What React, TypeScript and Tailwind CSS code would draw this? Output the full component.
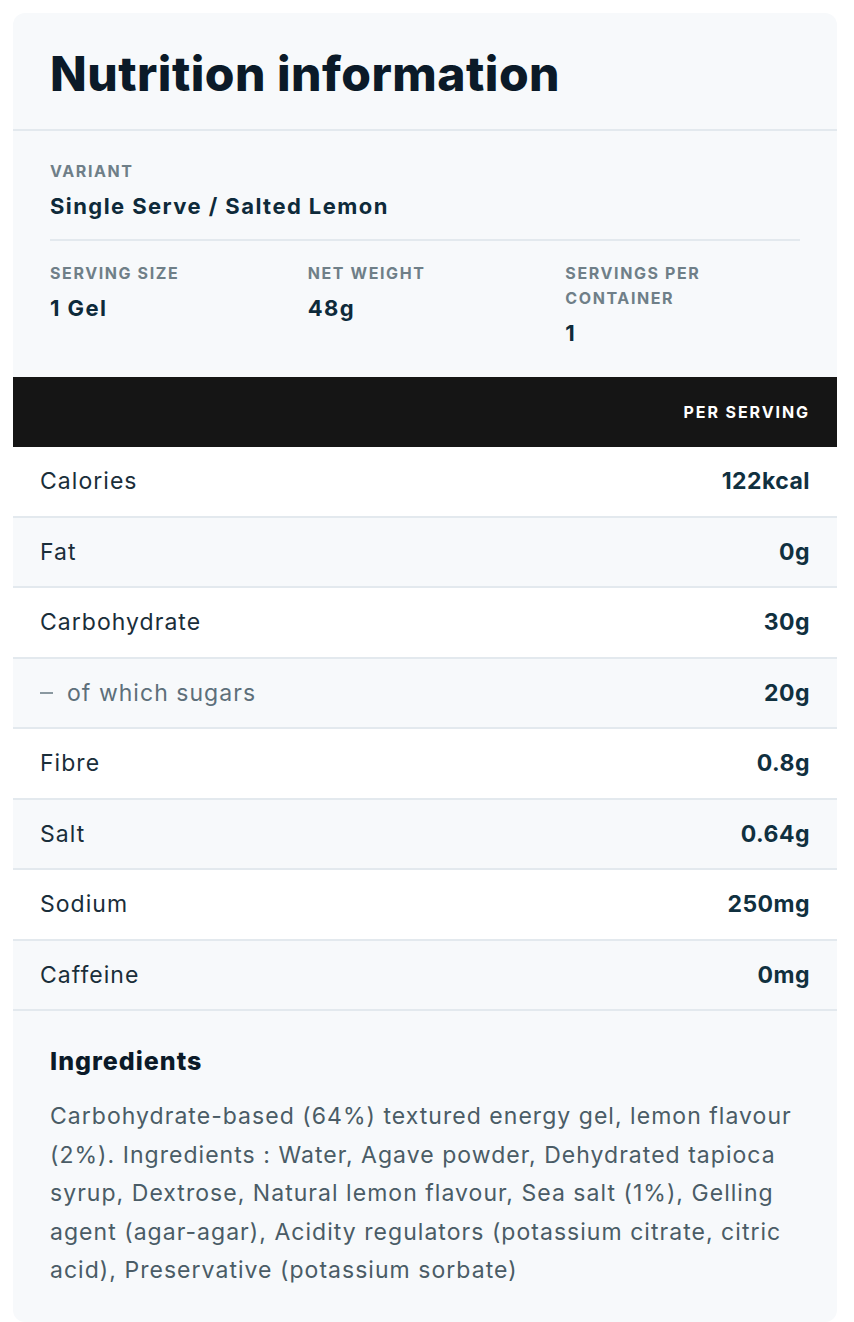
const rows = [
  { label: "Calories", value: "122kcal" },
  { label: "Fat", value: "0g" },
  { label: "Carbohydrate", value: "30g" },
  { label: "of which sugars", value: "20g", sub: true },
  { label: "Fibre", value: "0.8g" },
  { label: "Salt", value: "0.64g" },
  { label: "Sodium", value: "250mg" },
  { label: "Caffeine", value: "0mg" },
]

const font = "font-['Inter','Noto_Sans',sans-serif]"

function Info({ label, value }: { label: string; value: string }) {
  return (
    <div>
      <div className="text-[16px] font-bold uppercase leading-[25px] tracking-[0.1em] text-[#6f7f88]">{label}</div>
      <div className="mt-[7px] text-[22px] font-bold leading-[30px] tracking-[0.065em] text-[#0e2a3a]">{value}</div>
    </div>
  )
}

export default function App() {
  return (
    <div className={`min-h-screen bg-white pt-[13px] pl-[13px] pr-[17px] ${font}`}>
      <div className="overflow-hidden rounded-xl bg-[#f7f9fb]">
        {/* Title */}
        <div className="flex h-[118px] items-center border-b-2 border-[#e3e9ee] px-[37px] pt-[5px]">
          <h1 className="text-[48px] font-extrabold tracking-[0.01em] text-[#0b1a28]">Nutrition information</h1>
        </div>

        {/* Variant + serving info */}
        <div className="px-[37px] pt-[28px] pb-[29px]">
          <Info label="Variant" value="Single Serve / Salted Lemon" />
          <div className="mt-[18px] mb-[20px] h-[2px] bg-[#e3e9ee]" />
          <div className="grid grid-cols-3 gap-x-[23px]">
            <Info label="Serving size" value="1 Gel" />
            <Info label="Net weight" value="48g" />
            <Info label="Servings per container" value="1" />
          </div>
        </div>

        {/* Table header */}
        <div className="flex h-[70px] items-center justify-end bg-[#151515] px-[27px]">
          <span className="text-[16px] font-bold uppercase tracking-[0.12em] text-white">Per serving</span>
        </div>

        {/* Rows */}
        {rows.map((r, i) => (
          <div
            key={r.label}
            className={`flex h-[70.5px] items-center justify-between border-b-2 border-[#e3e9ee] px-[27px] text-[23px] ${
              i % 2 === 0 ? "bg-white" : "bg-[#f7f9fb]"
            }`}
          >
            {r.sub ? (
              <span className="flex items-center tracking-[0.045em] text-[#5d6f7a]">
                <span className="mr-[14px] h-[1.5px] w-[13px] bg-[#8a98a0]" />
                {r.label}
              </span>
            ) : (
              <span className="tracking-[0.045em] text-[#1a2e3a]">{r.label}</span>
            )}
            <span className="font-bold tracking-[0.02em] text-[#10303f]">{r.value}</span>
          </div>
        ))}

        {/* Ingredients */}
        <div className="px-[37px] pt-[35px] pb-[32px]">
          <h2 className="text-[25px] font-extrabold leading-[30px] tracking-[0.04em] text-[#0b1a28]">Ingredients</h2>
          <p className="mt-[21px] text-[23px] leading-[38.5px] tracking-[0.045em] text-[#4a5c66]">
            Carbohydrate-based (64%) textured energy gel, lemon flavour (2%). Ingredients : Water, Agave powder,
            Dehydrated tapioca syrup, Dextrose, Natural lemon flavour, Sea salt (1%), Gelling agent (agar-agar),
            Acidity regulators (potassium citrate, citric acid), Preservative (potassium sorbate)
          </p>
        </div>
      </div>
    </div>
  )
}
